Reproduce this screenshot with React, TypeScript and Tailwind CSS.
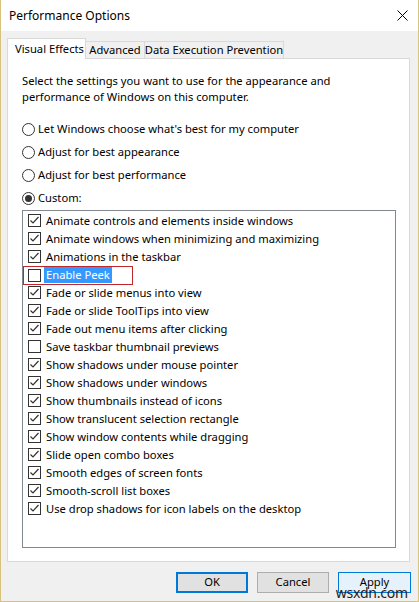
import React from "react";

// Visual effects list (checked state per row)
const effects: { label: string; checked: boolean; focus?: boolean }[] = [
  { label: "Animate controls and elements inside windows", checked: true },
  { label: "Animate windows when minimizing and maximizing", checked: true },
  { label: "Animations in the taskbar", checked: true },
  { label: "Enable Peek", checked: false, focus: true },
  { label: "Fade or slide menus into view", checked: true },
  { label: "Fade or slide ToolTips into view", checked: true },
  { label: "Fade out menu items after clicking", checked: true },
  { label: "Save taskbar thumbnail previews", checked: false },
  { label: "Show shadows under mouse pointer", checked: true },
  { label: "Show shadows under windows", checked: true },
  { label: "Show thumbnails instead of icons", checked: true },
  { label: "Show translucent selection rectangle", checked: true },
  { label: "Show window contents while dragging", checked: true },
  { label: "Slide open combo boxes", checked: true },
  { label: "Smooth edges of screen fonts", checked: true },
  { label: "Smooth-scroll list boxes", checked: true },
  { label: "Use drop shadows for icon labels on the desktop", checked: true },
];

const radios = [
  { label: "Let Windows choose what's best for my computer", selected: false },
  { label: "Adjust for best appearance", selected: false },
  { label: "Adjust for best performance", selected: false },
  { label: "Custom:", selected: true },
];

function CheckBox({ checked }: { checked: boolean }) {
  return (
    <span className="w-[13px] h-[13px] border border-[#333333] bg-white flex items-center justify-center shrink-0">
      {checked && (
        <svg width="11" height="11" viewBox="0 0 11 11">
          <path d="M1.5 5.5 L4 8 L9.5 2" fill="none" stroke="#333333" strokeWidth="1.2" />
        </svg>
      )}
    </span>
  );
}

function Radio({ selected }: { selected: boolean }) {
  return (
    <span className="w-[13px] h-[13px] rounded-full border border-[#333333] bg-white flex items-center justify-center shrink-0">
      {selected && <span className="w-[7px] h-[7px] rounded-full bg-[#333333]" />}
    </span>
  );
}

export default function App() {
  return (
    <div
      className="relative w-[419px] h-[602px] bg-[#f0f0f0] border-x border-b border-[#d8c27e] flex flex-col text-[11.2px] text-black overflow-hidden"
      style={{ fontFamily: '"Noto Sans", "Open Sans", sans-serif' }}
    >
      {/* Title bar */}
      <div className="h-[31px] bg-white flex items-center justify-between pl-[8px] pr-[10px] shrink-0">
        <span className="text-[12px]">Performance Options</span>
        <svg width="11" height="11" viewBox="0 0 11 11">
          <path d="M0.5 0.5 L10.5 10.5 M10.5 0.5 L0.5 10.5" stroke="#000" strokeWidth="1" />
        </svg>
      </div>

      {/* Tabs */}
      <div className="flex items-end pl-[6px] h-[27px] shrink-0 whitespace-nowrap">
        <div className="w-[79px] h-[21px] bg-white border-x border-t border-[#d9d9d9] flex items-center pl-[7px] relative top-px z-10">
          Visual Effects
        </div>
        <div className="w-[59px] h-[17px] border-t border-r border-[#d9d9d9] flex items-center justify-center">
          Advanced
        </div>
        <div className="w-[139px] h-[17px] border-t border-r border-[#d9d9d9] flex items-center justify-center">
          Data Execution Prevention
        </div>
      </div>

      {/* Panel */}
      <div className="ml-[6px] w-[403px] h-[504px] bg-white border border-[#d9d9d9] flex flex-col pl-[14px] pr-[12px] pt-[14px] shrink-0">
        <p className="leading-[16px]">
          Select the settings you want to use for the appearance and
          <br />
          performance of Windows on this computer.
        </p>

        <div className="flex flex-col mt-[13px]">
          {radios.map((r) => (
            <div key={r.label} className="h-[23px] flex items-center gap-[3px]">
              <Radio selected={r.selected} />
              <span>{r.label}</span>
            </div>
          ))}
        </div>

        <div className="w-[374px] h-[338px] border border-[#828790] pt-[1px] pl-[5px]">
          {effects.map((e) => (
            <div key={e.label} className="h-[18px] flex items-center">
              <div
                className={
                  e.focus
                    ? "flex items-center h-[19px] w-[110px] border border-[#c0272d] -ml-[5px] pl-[4px]"
                    : "flex items-center"
                }
              >
                <CheckBox checked={e.checked} />
                <span
                  className={
                    e.focus
                      ? "ml-[3px] px-[2px] h-[16px] leading-[16px] bg-[#3399ff] text-white"
                      : "ml-[5px]"
                  }
                >
                  {e.label}
                </span>
              </div>
            </div>
          ))}
        </div>
      </div>

      {/* Buttons */}
      <div className="flex justify-end gap-[9px] pr-[7px] pt-[10px]">
        <button className="w-[72px] h-[21px] bg-[#e1e1e1] border-2 border-[#0078d7] flex items-center justify-center">
          OK
        </button>
        <button className="w-[72px] h-[21px] bg-[#e1e1e1] border border-[#adadad] flex items-center justify-center">
          Cancel
        </button>
        <button className="w-[73px] h-[21px] bg-[#e5f1fb] border border-[#0078d7] flex items-center justify-center">
          Apply
        </button>
      </div>

      {/* Watermark */}
      <span className="absolute right-[10px] bottom-[1px] text-[14px] leading-[14px] text-[#222] tracking-[-0.2px]">
        wsxdn.com
      </span>
    </div>
  );
}
